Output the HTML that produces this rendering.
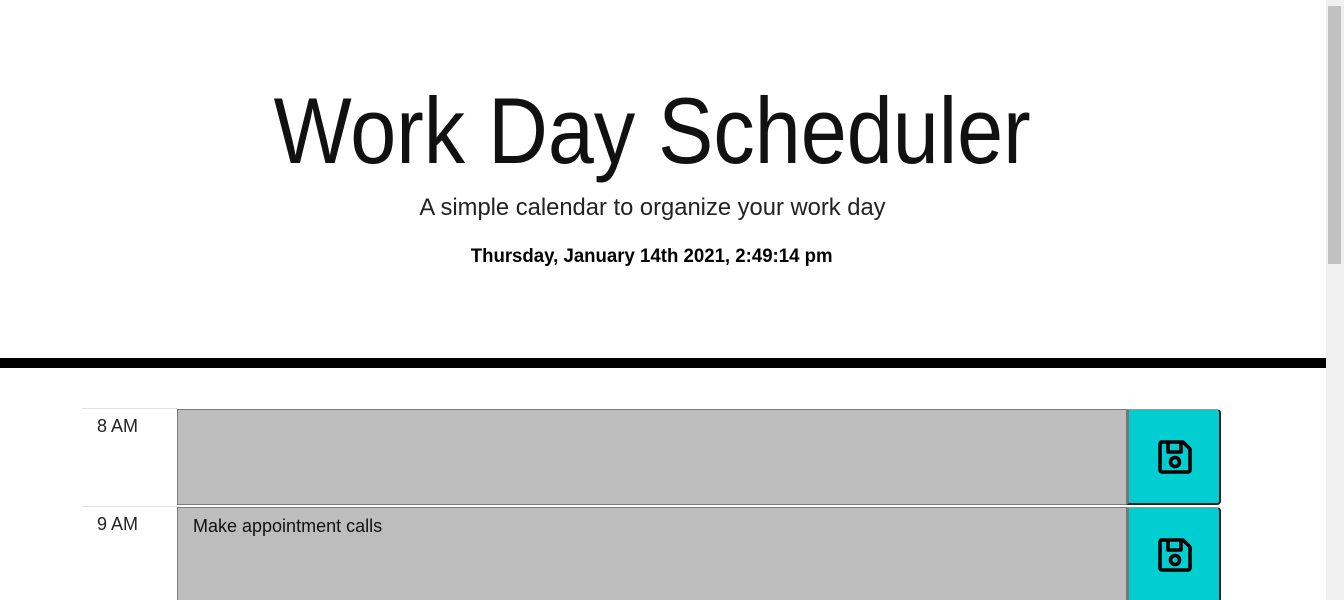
<!DOCTYPE html>
<html><head><meta charset="utf-8"><style>
html,body{margin:0;padding:0;background:#fff;overflow:hidden}
body{width:1344px;height:600px;position:relative;font-family:"Liberation Sans",sans-serif;color:#000}
.c{position:absolute;left:0;width:1304px;text-align:center;white-space:nowrap}
.c span{display:inline-block;transform-origin:center}
#t{top:76px;font-size:94px;font-weight:300;line-height:110px;color:#111}
#t span{transform:scaleX(0.88)}
#s{top:194px;font-size:24px;line-height:28px;color:#222}
#s span{transform:scaleX(0.99)}
#d{top:245px;font-size:19px;font-weight:bold;line-height:24px}
#d span{transform:scaleX(0.98)}
#bar{position:absolute;left:0;top:358px;width:1326px;height:10px;background:#000}
.row{position:absolute;left:82px;width:1139px;height:98px}
.hr{position:absolute;left:0;top:0;width:95px;height:97px;border-top:1px solid #dee2e6;font-size:18px;line-height:20px}
.hr span{position:absolute;left:15px;top:7px;color:#222}
.ta{position:absolute;left:95px;top:1px;width:948px;height:94px;background:#bdbdbd;border:1px solid #7a7a7a;font-size:18px;color:#111}
.ta span{position:absolute;left:15px;top:8px}
.btn{position:absolute;left:1044px;top:1px;width:90px;height:93px;background:#00ced1;border-left:3px solid #777;border-top:1px solid #999;border-right:2px solid #222;border-bottom:2px solid #222;border-radius:0 4px 4px 0}
.btn svg{position:absolute;left:28px;top:29px}
#sb{position:absolute;left:1326px;top:0;width:18px;height:600px;background:#f0f0f0}
#th{position:absolute;left:1328px;top:6px;width:13px;height:258px;background:#c1c1c1}
</style></head><body>
<div class="c" id="t"><span>Work Day Scheduler</span></div>
<div class="c" id="s"><span>A simple calendar to organize your work day</span></div>
<div class="c" id="d"><span>Thursday, January 14th 2021, 2:49:14 pm</span></div>
<div id="bar"></div>
<div class="row" style="top:408px">
<div class="hr"><span>8 AM</span></div>
<div class="ta"></div>
<div class="btn"><svg width="36" height="36" viewBox="0 0 36 36" fill="none" stroke="#000" stroke-width="3.6" stroke-linejoin="round"><path d="M4 3H26L33 10V31A2 2 0 0 1 31 33H5A2 2 0 0 1 3 31V5A2 2 0 0 1 5 3Z"/><path d="M11 3V13H24V3"/><circle cx="18" cy="23" r="4.5"/></svg></div>
</div>
<div class="row" style="top:506px">
<div class="hr"><span>9 AM</span></div>
<div class="ta"><span>Make appointment calls</span></div>
<div class="btn"><svg width="36" height="36" viewBox="0 0 36 36" fill="none" stroke="#000" stroke-width="3.6" stroke-linejoin="round"><path d="M4 3H26L33 10V31A2 2 0 0 1 31 33H5A2 2 0 0 1 3 31V5A2 2 0 0 1 5 3Z"/><path d="M11 3V13H24V3"/><circle cx="18" cy="23" r="4.5"/></svg></div>
</div>
<div id="sb"></div><div id="th"></div>
</body></html>
